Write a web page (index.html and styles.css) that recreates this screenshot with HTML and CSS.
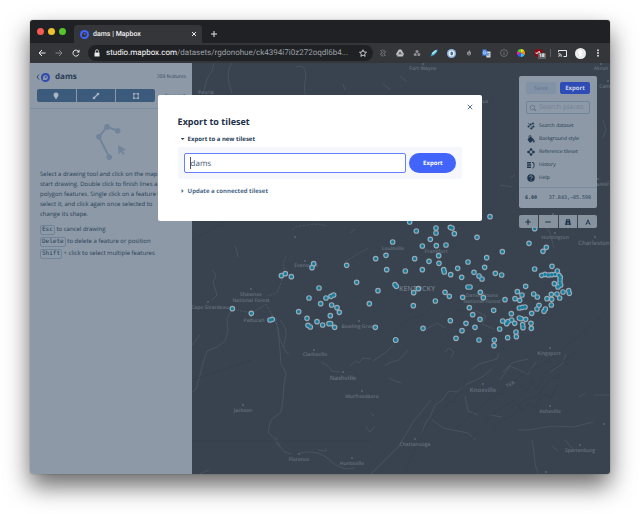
FILE: index.html
```html
<!DOCTYPE html>
<html lang="en">
<head>
<meta charset="utf-8">
<title>dams | Mapbox</title>
<link rel="stylesheet" href="styles.css">
</head>
<body>
<svg class="defs" aria-hidden="true">
  <symbol id="logo" viewBox="0 0 18 18"><circle cx="9" cy="9" r="9" fill="currentColor"/><path d="M4.2 13.8C3.7 10 4 7.300 5.700 5.600a4.700 4.700 0 1 1 6.700 6.700C10.700 14 8 14.300 4.200 13.800z" fill="var(--hole)"/><path d="M9.600 5.200l.9 2 2 .9-2 .9-.9 2-.9-2-2-.9 2-.9z" fill="currentColor"/></symbol>
</svg>
<div class="window">
  <div class="tabstrip">
    <span class="light red"></span><span class="light yellow"></span><span class="light green"></span>
    <div class="tab">
      <svg class="favicon"><use href="#logo"/></svg>
      <span class="tab-title">dams | Mapbox</span>
      <button class="plain" aria-label="Close tab"><svg class="i6" viewBox="0 0 12 12"><path d="M2 2l8 8M10 2l-8 8" stroke="#e8eaed" stroke-width="2"/></svg></button>
    </div>
    <button class="plain newtab" aria-label="New tab"><svg class="i8" viewBox="0 0 16 16"><path d="M8 2v12M2 8h12" stroke="#e0e2e4" stroke-width="2"/></svg></button>
  </div>
  <div class="toolbar">
    <div class="nav">
      <button class="plain" aria-label="Back"><svg class="i8" viewBox="0 0 16 16"><path d="M15 8H2M8 2L2 8l6 6" class="line light-line"/></svg></button>
      <button class="plain" aria-label="Forward"><svg class="i8" viewBox="0 0 16 16"><path d="M1 8h13M8 2l6 6-6 6" class="line" stroke="#84878b"/></svg></button>
      <button class="plain" aria-label="Reload"><svg class="i8" viewBox="0 0 16 16"><path d="M13.500 10.500A6 6 0 1 1 13 5" class="line light-line"/><path d="M15 1v6H9z" fill="#e8eaed"/></svg></button>
    </div>
    <div class="address">
      <svg class="i8" viewBox="0 0 16 16"><path d="M3 7h10v8H3z" fill="#e8eaed"/><path d="M5 7V4.500a3 3 0 0 1 6 0V7" fill="none" stroke="#e8eaed" stroke-width="1.600"/></svg>
      <span class="url"><b>studio.mapbox.com</b>/datasets/rgdonohue/ck4394i7i0z272oqdl6b4...</span>
      <button class="plain" aria-label="Bookmark"><svg class="i8" viewBox="0 0 16 16"><path d="M8 1.500l2 4.500 5 .5-3.700 3.300 1 4.900L8 12.200l-4.300 2.500 1-4.900L1 6.500 6 6z" fill="none" stroke="#e8eaed" stroke-width="1.600"/></svg></button>
    </div>
    <div class="extensions">
      <svg class="i8" viewBox="0 0 16 16"><path d="M2 2l12 12M4 3.500a6 6 0 0 1 10 4M12 12.500a6 6 0 0 1-10-4M5 6v4a3 3 0 0 0 3 2M11 10V6a3 3 0 0 0-3-2" fill="none" stroke="#707274" stroke-width="1.500"/></svg>
      <svg class="i8" viewBox="0 0 16 16"><path d="M5.500 1h5L16 10l-2.500 5h-11L0 10z" fill="#bcbdbd"/><path d="M8 5l3 5H5z" fill="#4b4d4f"/><path d="M2 14l3-4h10" stroke="#77797a" fill="none"/></svg>
      <svg class="i8" viewBox="0 0 16 16" fill="#8d8f90"><circle cx="8" cy="5" r="3.200"/><circle cx="4.500" cy="11" r="3.200"/><circle cx="11.500" cy="11" r="3.200"/><path d="M8 9l1 3H7z" fill="#35363a"/></svg>
      <svg class="i8" viewBox="0 0 16 16"><path d="M1 15l3-7 7-6 4-1-1 5-6 6z" fill="#4fc3e8"/><path d="M4 8l7-6 1 2-7 7z" fill="#c5f2fb"/><path d="M1 15l3-4 2 1z" fill="#287d9b"/></svg>
      <svg class="i9" viewBox="0 0 18 18"><circle cx="9" cy="9" r="9" fill="#91b7df"/><circle cx="9" cy="9" r="6" fill="#e9f0f8"/><ellipse cx="9.500" cy="9" rx="2.600" ry="4" fill="#41719f"/></svg>
      <svg class="i8" viewBox="0 0 16 16"><path d="M8 1c1 3 4 4 4 8a4 4 0 0 1-8 0c0-3 2-3 2-5 1 1 1 2 1 3 1-1 1-4 1-6z" fill="#97999a"/><path d="M8 8v4" stroke="#4d4e50" stroke-width="2"/></svg>
      <svg class="i9" viewBox="0 0 18 18"><path d="M7 5h10v12H9z" fill="#d5dbe3"/><path d="M1 1h8l3 12H1z" fill="#4587ed"/><path d="M8 7a3 3 0 1 1-1-2M5 7h3" stroke="#fff" fill="none"/><path d="M11 9h5M13.500 8v1c0 2-1 4-2 5m0-4c1 2 2 3 4 4" stroke="#607387" fill="none"/></svg>
      <svg class="i8" viewBox="0 0 16 16"><circle cx="8" cy="8" r="7" fill="none" stroke="#777a7c" stroke-width="1.500"/><path d="M8 7v5M8 4v2" stroke="#777a7c" stroke-width="1.800"/></svg>
      <svg class="i8" viewBox="0 0 16 16"><path d="M8 8V0a8 8 0 0 1 7 4z" fill="#ffd21d"/><path d="M8 8l7-4a8 8 0 0 1 0 8z" fill="#ef8b20"/><path d="M8 8l7 4a8 8 0 0 1-7 4z" fill="#28c9ec"/><path d="M8 8v8a8 8 0 0 1-7-4z" fill="#3e5cf2"/><path d="M8 8l-7 4a8 8 0 0 1 0-8z" fill="#ed22b8"/><path d="M8 8L1 4a8 8 0 0 1 7-4z" fill="#44dc30"/></svg>
      <span class="blocker"><svg class="i9" viewBox="0 0 18 18"><path d="M9 0l8 2v7c0 4-4 7-8 9-4-2-8-5-8-9V2z" fill="#8e0911"/><path d="M4 6v3h3V6m5-1H9v2h3v2H9" stroke="#fff" fill="none" stroke-width="1.300"/></svg><span class="count">18</span></span>
    </div>
    <div class="end">
      <svg class="i9" viewBox="0 0 18 16"><path d="M1 5V2h16v12h-6" class="line light-line"/><path d="M1 14h1M1 11a3 3 0 0 1 3 3M1 8a6 6 0 0 1 6 6" class="line light-line"/></svg>
      <svg class="avatar" viewBox="0 0 22 22"><circle cx="11" cy="11" r="11" fill="#eee"/><path d="M6 4c4-3 10-1 10 4 0 3-1 4-2 6 2 2 0 4-3 4s-5-2-3-4C6 12 5 8 6 4z" fill="#fff" stroke="#d3d3d3"/></svg>
      <button class="plain" aria-label="Menu"><svg class="i8" viewBox="0 0 16 16" fill="#e8eaed"><circle cx="8" cy="2.500" r="1.800"/><circle cx="8" cy="8" r="1.800"/><circle cx="8" cy="13.500" r="1.800"/></svg></button>
    </div>
  </div>

  <div class="app">
    <aside class="sidebar">
      <header class="side-head">
        <div class="side-title">
          <a href="#" class="back" aria-label="Back to datasets"><svg class="chev" viewBox="0 0 8 12"><path d="M6 1L2 6l4 5" fill="none" stroke="#263e56" stroke-width="1.800"/></svg><svg class="brand"><use href="#logo"/></svg></a>
          <h1>dams</h1>
          <span class="features">209 features</span>
        </div>
        <div class="tools">
          <div class="draw">
            <button aria-label="Draw point"><svg class="i8" viewBox="0 0 16 16"><path d="M8 1a5 5 0 0 1 5 5c0 3-3 5-5 9-2-4-5-6-5-9a5 5 0 0 1 5-5z" fill="#a9b5c1"/></svg></button>
            <button aria-label="Draw line"><svg class="i8" viewBox="0 0 16 16"><path d="M4 12l8-8" stroke="#a9b5c1" stroke-width="2.400"/><circle cx="4" cy="12" r="2.600" fill="#a9b5c1"/><circle cx="12" cy="4" r="2.600" fill="#a9b5c1"/></svg></button>
            <button aria-label="Draw polygon"><svg class="i8" viewBox="0 0 16 16"><path d="M3.500 3.500h9v9h-9z" fill="none" stroke="#a9b5c1" stroke-width="1.600"/><path d="M2 2h3v3H2zM11 2h3v3h-3zM2 11h3v3H2zM11 11h3v3h-3z" fill="#a9b5c1"/></svg></button>
          </div>
          <a href="#" class="import">Import</a>
        </div>
      </header>
      <div class="intro">
        <svg class="sketch" viewBox="96 124 32 38"><path d="M109.300 157.300L98.900 136.700l8.100-9.800 10.700 3.800" fill="none" stroke="#70859c" stroke-width="2"/><g fill="#70859c"><circle cx="98.900" cy="136.700" r="2.800"/><circle cx="107" cy="126.900" r="2.800"/><circle cx="117.700" cy="130.700" r="2.800"/><circle cx="109.300" cy="157.300" r="2.800"/><path d="M118 145l8.300 5-4 .8 2.500 3-1.400 1-2.400-3-2.400 3z"/></g></svg>
        <p class="help">Select a drawing tool and click on the map to start drawing. Double click to finish lines and polygon features. Single click on a feature to select it, and click again once selected to change its shape.</p>
        <ul class="keys">
          <li><kbd>Esc</kbd> to cancel drawing</li>
          <li><kbd>Delete</kbd> to delete a feature or position</li>
          <li><kbd>Shift</kbd> + click to select multiple features</li>
        </ul>
      </div>
    </aside>

    <main class="map">
      <svg class="canvas" viewBox="192 63 418 411" preserveAspectRatio="xMidYMid slice" role="img" aria-label="Map of dams in Kentucky">
        <g class="rivers">
          <path d="M214 63l-2 8-5 8-2 8-2 6M196 93l4-3M296 67q12-4 9 15t8 15M232 63q-8 10 0 30M345 90l-2-6M383 84l8 6M400 76l6 5"/>
          <path d="M235 246l2 6 1 5M212 270l4 5-3 7 4 13-6 6M232 309l-5 10 1 12-3 10-8 6-10 4-4 12-3 12-4 14-7 6"/>
          <path d="M286 256l-3 8 2 8-6 16-2 5-10 3M232 309l20 4 14-9 8 14M292 230l6-4 20-2 9 2M345 262l14-9 10-5M276 318l2 15 5 14" stroke-dasharray="3 1"/>
          <path d="M274 318l4 10 2 22 1 14 5 9-2 11-1 16-2 12-10 8-3 12 6 6 3 6 8 8 6 2" />
          <path d="M276 437l4 10M300 453l8-1 10 1 8 4 10 8 9 4 10-1M318 450l8 1v-3M280 320q9 10 5 20t4 14" stroke-width="1.200"/>
          <path d="M321 362l6 3 5 6 8 1M350 366l6-5 3 2 4-5 8 1M385 365l6-3 8-2 9-10M389 378l6 3 6 2M366 427l4 5 5-6M371 413l3 3"/>
          <path d="M421 436l5-14 4-5 5-12 6-4 8-10 8 1 10-8 15-7 10-8M465 396l3 15 10 4M471 370l8-6 18-5 2-6M503 372l9-9 7-2 9-2" stroke-width="1.200"/>
          <path d="M370 475l15-15 14-14 14-24 18-22M431 419l12 9 25 5 7 7M532 440l2 12 1 12 3 10M579 397l6-4M595 395h16M445 352l4-4 5 4-3 6"/>
          <path d="M518 430l10 0 25-4 20 1 20-5M490 415l12 2M500 380l10-14 18 8 8-12M550 372l12-8 4-10M474 310l12 6-4 8 12 5M425 330l12-7 8 5 5-5M393 345l-8 8-12 8"/>
          <path d="M575 79l8 3M603 120l3 10-4 9M594 162l-6 14M510 178l5-3M500 185l12 2M600 185l10-4M545 225l5 8 4 15M350 233l5-4M192 345l8-10M197 475l12-5M565 440l9 10M552 446l6 5"/>
        </g>
        <g class="relief"><path d="M455 430l28-26 20-14 22-17 20-10 25-20 35-30M470 440l25-28 20-12 32-28 30-20M490 435l10-14 15-7 8-13 16-6 10-15 12-6M510 408l8-5 4 9 7-9 6 4 9-13 7 4 7-15M520 385l6 6 6-10 5 8 7-12M405 470l20-42 10-14 18-14 12-15M395 330l15-12 14-3 18-20M440 335l20-25 15 3M192 182h290M192 441h180M192 240l40-22M192 380l60-20"/></g>
        <g class="labels">
          <text x="423" y="70">Fort Wayne</text><text x="601" y="70">Akron</text><text x="608" y="88">Canton</text><text x="206" y="94">Peoria</text><text x="476" y="103">Columbus</text>
          <text x="251" y="296">Shawnee</text><text x="251" y="302">National Forest</text><text x="306" y="267">Evansville</text><text x="210" y="309">Cape Girardeau</text><text x="254" y="322">Paducah</text><text x="393" y="250">Louisville</text><text x="436" y="253">Frankfort</text><text x="555" y="239">Huntington</text><text x="594" y="245" class="mid">Charleston</text><text x="608" y="186">Parkersburg</text>
          <text x="417" y="291" class="state">KENTUCKY</text><text x="482" y="297">Daniel Boone</text><text x="482" y="303">National Forest</text><text x="359" y="328">Bowling Green</text><text x="315" y="356">Clarksville</text><text x="343" y="380" class="mid">Nashville</text><text x="362" y="398">Murfreesboro</text><text x="243" y="412">Jackson</text><text x="299" y="461">Florence</text><text x="352" y="465">Huntsville</text><text x="415" y="446">Chattanooga</text><text x="483" y="392" class="mid">Knoxville</text><text x="549" y="355">Kingsport</text><text x="550" y="413">Asheville</text><text x="580" y="452">Spartanburg</text><text x="510" y="386" transform="rotate(-30 510 384)">TVA</text>
        </g>
        <path class="towns" d="M423 64h0M601 64h0M608 81h0M305 261h0M251 289h0M208 302h0M251 316h0M295 237h0M555 233h0M595 237h0M553 214h0M598 179h0M359 321h0M314 350h0M343 372h0M362 391h0M243 405h0M299 454h0M352 458h0M415 439h0M483 384h0M550 348h0M550 406h0M580 445h0M546 472h0M604 424h0"/>
        <defs>
          <g id="dams">
            <path transform="translate(190 215) scale(.33333)" d="M127 281h0M184 295h0M240 315h0M247 313h0M274 182h0M286 176h0M304 185h0M371 146h0M366 158h0M470 151h0M387 219h0M357 249h0M408 249h0M423 244h0M431 240h0M392 266h0M425 270h0M441 278h0M448 292h0M421 302h0M326 290h0M351 310h0M354 331h0M361 336h0M381 320h0M398 330h0M417 326h0M422 326h0M434 337h0M500 202h0M538 266h0M556 337h0M564 227h0M557 131h0M588 121h0M608 81h0M590 164h0M615 209h0M619 214h0M617 375h0"/>
            <path transform="translate(390 205) scale(.33333)" d="M59 51h0M79 78h0M138 69h0M138 84h0M181 67h0M186 69h0M193 86h0M121 103h0M97 123h0M139 122h0M168 120h0M261 97h0M300 35h0M146 152h0M147 175h0M117 169h0M74 161h0M97 194h0M46 198h0M161 194h0M163 201h0M182 209h0M203 190h0M215 217h0M234 171h0M290 158h0M284 187h0M252 202h0M267 213h0M276 222h0M316 205h0M335 210h0M337 140h0M417 115h0M469 127h0M459 139h0M434 71h0M434 192h0M486 184h0M502 198h0M455 211h0M465 208h0M475 210h0M485 209h0M495 208h0M507 211h0M511 217h0M510 224h0M510 233h0M512 240h0M504 246h0M493 236h0M407 244h0M382 260h0M396 270h0M375 281h0M389 286h0M345 284h0M431 267h0M442 276h0M484 268h0M501 267h0M519 261h0M536 257h0M538 265h0M509 279h0M471 281h0M485 283h0M484 300h0M447 301h0M441 312h0M466 312h0M462 319h0M425 325h0M388 309h0M397 307h0M405 306h0M364 326h0M365 345h0M374 355h0M350 356h0M354 350h0M338 348h0M388 339h0M393 341h0M407 343h0M398 359h0M399 368h0M423 355h0M424 370h0M378 381h0M379 395h0M353 398h0M329 372h0M313 405h0M312 422h0M267 405h0M311 316h0M270 343h0M255 367h0M248 329h0M238 308h0M228 355h0M216 377h0M198 400h0M181 347h0M136 288h0M165 262h0M178 274h0M218 277h0M234 246h0M240 246h0M271 262h0M280 278h0M85 251h0M71 263h0M70 302h0M99 370h0M17 405h0"/>
          </g>
        </defs>
        <use href="#dams" class="ring"/><use href="#dams" class="dot"/>
      </svg>

      <div class="controls">
        <section class="panel">
          <div class="panel-main">
            <div class="actions"><button class="save" disabled>Save</button><button class="export">Export</button></div>
            <label class="search"><svg class="i8" viewBox="0 0 16 16"><circle cx="7" cy="7" r="4.500" fill="none" stroke="#647a92" stroke-width="2"/><path d="M10 10l4 4" stroke="#647a92" stroke-width="2.400"/></svg><input type="text" placeholder="Search places" aria-label="Search places"></label>
            <nav class="menu">
              <a href="#"><svg class="i8" viewBox="0 0 16 16"><g fill="#20374f"><circle cx="3" cy="9" r="2"/><circle cx="7" cy="5" r="2"/><circle cx="12" cy="3" r="2"/><circle cx="13" cy="9" r="2"/><circle cx="9" cy="13" r="2"/></g><path d="M3 9l4-4 5-2M13 9l-4 4-4-1M2 2l3 3M8 9l3 1" stroke="#20374f" stroke-width="1.200" fill="none"/></svg>Search dataset</a>
              <a href="#"><svg class="i8" viewBox="0 0 16 16" fill="#20374f"><path d="M1 9l6-6 7 6-6 6H5z"/><path d="M4 7V3a2 2 0 0 1 4 0v4" fill="none" stroke="#20374f" stroke-width="1.500"/><path d="M13 8c2 3 3 4 2 6s-3 1-3-1z"/></svg>Background style</a>
              <a href="#"><svg class="i8" viewBox="0 0 16 16"><path d="M3 8l5-5 5 5-5 5z" fill="none" stroke="#20374f" stroke-width="1.600"/><g fill="#20374f"><circle cx="3" cy="8" r="2.600"/><circle cx="8" cy="3" r="2.600"/><circle cx="13" cy="8" r="2.600"/><circle cx="8" cy="13" r="2.600"/></g></svg>Reference tileset</a>
              <a href="#"><svg class="i8" viewBox="0 0 16 16"><path d="M0 3.500h8M0 8h8M0 12.500h8" stroke="#20374f" stroke-width="3.400"/><path d="M10 3h2q2 0 2 3v5q0 3-3 3M10 2l3 3" fill="none" stroke="#20374f" stroke-width="1.800"/></svg>History</a>
              <a href="#"><svg class="i8" viewBox="0 0 16 16"><circle cx="8" cy="8" r="7.500" fill="#20374f"/><path d="M5.500 6a2.500 2.500 0 1 1 4 2c-1 .6-1.500 1-1.500 2M8 11.500v1.800" fill="none" stroke="#8e9ba8" stroke-width="1.800"/></svg>Help</a>
            </nav>
          </div>
          <div class="position"><b>6.00</b><span>37.843,−85.598</span></div>
        </section>
        <div class="zoombar">
          <button aria-label="Zoom in"><svg class="i8" viewBox="0 0 16 16"><path d="M8 2.500v11M2.500 8h11" stroke="#20374f" stroke-width="2.400"/></svg></button>
          <button aria-label="Zoom out"><svg class="i8" viewBox="0 0 16 16"><path d="M2.500 8h11" stroke="#20374f" stroke-width="2.400"/></svg></button>
          <button aria-label="Pitch"><svg class="i8" viewBox="0 0 16 16"><path d="M4.500 2h7L14 14H2z" fill="#20374f"/><path d="M8 3v3M8 9v4" stroke="#8e9ba8" stroke-width="2"/></svg></button>
          <button aria-label="North"><svg class="i8" viewBox="0 0 16 16"><path d="M8 2l5.500 12L8 11l-5.500 3z" fill="#20374f"/><path d="M8 7l2 4H6z" fill="#8e9ba8"/></svg></button>
        </div>
      </div>
    </main>

    <div class="overlay">
      <div class="modal" role="dialog" aria-modal="true" aria-labelledby="modal-title">
        <button class="plain close" aria-label="Close"><svg class="i6" viewBox="0 0 12 12"><path d="M1.500 1.500l9 9M10.500 1.500l-9 9" stroke="#41617f" stroke-width="1.700"/></svg></button>
        <h2 id="modal-title">Export to tileset</h2>
        <button class="plain toggle open" aria-expanded="true"><span class="caret down"></span>Export to a new tileset</button>
        <form class="export-form">
          <input type="text" value="dams" aria-label="Tileset name"><span class="cursor"></span>
          <button type="button">Export</button>
        </form>
        <button class="plain toggle" aria-expanded="false"><span class="caret right"></span>Update a connected tileset</button>
      </div>
    </div>
  </div>
</div>
</body>
</html>
```
FILE: styles.css
```css
* { box-sizing: border-box; }
body {
  margin: 0;
  min-height: 100vh;
  padding: 20px 30px 40px;
  display: flex;
  background: #fff;
  font: 6px/10px "Open Sans", "Noto Sans", sans-serif;
  color: #263e56;
  text-rendering: geometricPrecision;
}
button, input { font: inherit; color: inherit; margin: 0; text-rendering: inherit; }
button { padding: 0; border: 0; display: flex; align-items: center; justify-content: center; }
a { color: inherit; text-decoration: none; }
svg { display: block; flex: none; }
.plain { background: none; }
.defs { position: absolute; width: 0; height: 0; }
.i6 { width: 6px; height: 6px; }
.i8 { width: 8px; height: 8px; }
.i9 { width: 9px; height: 9px; }
.line { fill: none; stroke-width: 2; }
.light-line { stroke: #e8eaed; }

.window {
  flex: 1;
  min-width: 0;
  display: flex;
  flex-direction: column;
  border-radius: 3px;
  overflow: hidden;
  box-shadow: 0 0 1px rgba(0, 0, 0, .7), 0 12px 24px rgba(0, 0, 0, .6);
}

/* Browser frame */
.tabstrip { height: 23px; background: #202124; display: flex; align-items: center; gap: 4px; padding-left: 7px; }
.light { width: 7px; height: 7px; border-radius: 50%; }
.red { background: #f65b51; }
.yellow { background: #efc02c; }
.green { background: #56c52c; }
.tab {
  align-self: flex-end;
  width: 128px;
  height: 18px;
  margin-left: 4px;
  padding: 0 5px 0 6px;
  display: flex;
  align-items: center;
  gap: 4px;
  border-radius: 4px 4px 0 0;
  background: #35363a;
  color: #f1f1f2;
  font: 500 7px/10px Roboto, sans-serif;
}
.tab-title { flex: 1; }
.favicon, .brand { width: 9px; height: 9px; color: #4264fb; --hole: #35363a; }
.newtab { margin: 4px 0 0 4px; }
.toolbar { height: 20px; background: #35363a; display: flex; align-items: center; }
.nav { display: flex; gap: 9px; padding: 0 8px; }
.address {
  flex: 1;
  min-width: 0;
  height: 16px;
  border-radius: 8px;
  padding: 0 6px 0 5px;
  display: flex;
  align-items: center;
  gap: 5px;
  background: #202124;
  color: #9aa0a6;
  font: 8px/10px Roboto, sans-serif;
}
.url { flex: 1; min-width: 0; overflow: hidden; white-space: nowrap; }
.url b { font-weight: 400; color: #fff; }
.extensions { display: flex; align-items: center; gap: 9px; padding: 0 7px 0 6px; }
.blocker { position: relative; }
.count {
  position: absolute;
  left: 4px;
  top: 4px;
  padding: 0 1px;
  background: #5e6063;
  color: #fff;
  font: 700 5px/6px Roboto, sans-serif;
}
.end { display: flex; align-items: center; gap: 8px; padding: 0 8px 0 7px; border-left: 1px solid #5f6164; height: 8px; }
.avatar { width: 11px; height: 11px; }

/* Dataset sidebar */
.app { flex: 1; min-height: 0; display: flex; position: relative; }
.sidebar { flex: 0 0 162px; background: #8d99a6; }
.side-head { padding: 8px 6px 6px; border-bottom: 1px solid #7b8ea3; }
.side-title { display: flex; align-items: center; height: 12px; }
.back { display: flex; align-items: center; }
.chev { width: 4px; height: 6px; }
.brand { margin-left: 1px; color: #2d4bb0; --hole: #8d99a6; }
.sidebar h1 { margin: 0 0 0 5px; font: 700 8px/12px "Open Sans", sans-serif; flex: 1; }
.features { color: #334b63; font-size: 5px; }
.tools { display: flex; align-items: center; gap: 10px; margin: 6px 0 0 1px; }
.draw { flex: 0 0 118px; display: flex; gap: 1px; height: 13px; }
.draw button { flex: 1; background: #3c5b7c; }
.draw button:first-child { border-radius: 2px 0 0 2px; }
.draw button:last-child { border-radius: 0 2px 2px 0; }
.import { font-weight: 700; color: #3c5b7c; }
.intro { padding: 15px 10px; }
.sketch { width: 32px; height: 38px; margin: 0 auto 7px 56px; }
.help { margin: 0 0 4px; max-width: 134px; }
.keys { list-style: none; margin: 0; padding: 0; }
.keys li { height: 12px; line-height: 12px; white-space: nowrap; }
kbd {
  display: inline-block;
  padding: 0 1px;
  border: 1px solid #70839a;
  border-radius: 2px;
  font: 6px/8px "DejaVu Sans Mono", monospace;
}

/* Map */
.map { flex: 1; min-width: 0; position: relative; background: #38434f; overflow: hidden; }
.canvas { position: absolute; inset: 0; width: 100%; height: 100%; }
.rivers path { fill: none; stroke: #4b5763; stroke-width: .8; stroke-linejoin: round; }
.relief path { fill: none; stroke: #35404b; stroke-width: 1; }
.labels text { fill: #65707c; font: 600 5px "Open Sans", sans-serif; text-anchor: middle; }
.labels .mid { font-size: 6px; }
.labels .state { font-size: 7px; fill: #717c87; }
.towns { stroke: #596571; stroke-width: 2; stroke-linecap: round; }
.ring, .dot { fill: none; stroke-linecap: round; }
.ring { stroke: #9aaab5; stroke-width: 17; }
.dot { stroke: #137d9f; stroke-width: 10; }

.controls { position: absolute; top: 13px; right: 13px; width: 78px; display: grid; gap: 7px; }
.panel { border-radius: 2px; background: #8d99a6; }
.panel-main { padding: 6px 7px 3px; border-bottom: 1px solid #778ba0; }
.actions { display: flex; gap: 4px; }
.actions button { flex: 1; height: 12px; border-radius: 2px; font-weight: 700; }
.actions .save { background: #8292a6; color: #6d8098; }
.actions .export { background: #2f4bb5; color: #c6d0e2; }
.search {
  display: flex;
  align-items: center;
  gap: 2px;
  height: 13px;
  margin: 7px 0 5px;
  padding-left: 2px;
  border: 1px solid #70849b;
  border-radius: 2px;
}
.search input { width: 100%; min-width: 0; padding: 0; border: 0; background: none; outline: 0; font-size: 7px; }
.search input::placeholder { color: #70839a; opacity: 1; }
.menu { color: #20374f; white-space: nowrap; font-size: 5px; }
.menu a { display: flex; align-items: center; gap: 4px; height: 13px; }
.menu svg { margin-left: 1px; }
.position {
  display: flex;
  justify-content: space-between;
  padding: 5px 6px;
  font: 5px/10px "DejaVu Sans Mono", monospace;
  white-space: nowrap;
}
.zoombar { display: flex; gap: 1px; height: 13px; }
.zoombar button { flex: 1; background: rgba(141, 153, 166, .93); }
.zoombar button:first-child { border-radius: 2px 0 0 2px; }
.zoombar button:last-child { border-radius: 0 2px 2px 0; }

/* Export dialog */
.overlay { position: absolute; inset: 0; display: flex; justify-content: center; align-items: flex-start; padding-top: 32px; }
.modal {
  position: relative;
  width: 56%;
  padding: 20px 20px 25px;
  border-radius: 2px;
  background: #fff;
}
.close { position: absolute; top: 9px; right: 9px; }
.modal h2 { margin: 0; color: #1c3048; font: 700 9px/14px "Open Sans", sans-serif; }
.toggle { height: 10px; margin-top: 7px; padding-left: 3px; gap: 3px; font-weight: 700; color: #4b6987; }
.toggle.open { margin-top: 5px; color: #263e56; }
.caret { width: 4px; height: 4px; background: currentColor; }
.down { clip-path: polygon(0 1px, 4px 1px, 2px 3px); }
.right { clip-path: polygon(1px 0, 3px 2px, 1px 4px); }
.export-form {
  position: relative;
  display: flex;
  gap: 3px;
  margin: 3px 0 0;
  padding: 6px;
  border-radius: 2px;
  background: #f5f7fc;
}
.export-form input {
  flex: 1;
  min-width: 0;
  height: 20px;
  padding: 0 6px;
  border: 1px solid #6680ff;
  border-radius: 2px;
  outline: 0;
  background: #fff;
  color: #40536a;
  font-size: 8px;
}
.export-form button { width: 47px; height: 20px; border-radius: 10px; background: #4264fb; color: #fff; font-weight: 700; }
.cursor { position: absolute; left: 12px; top: 10px; width: 1px; height: 12px; background: #40536a; }
```
